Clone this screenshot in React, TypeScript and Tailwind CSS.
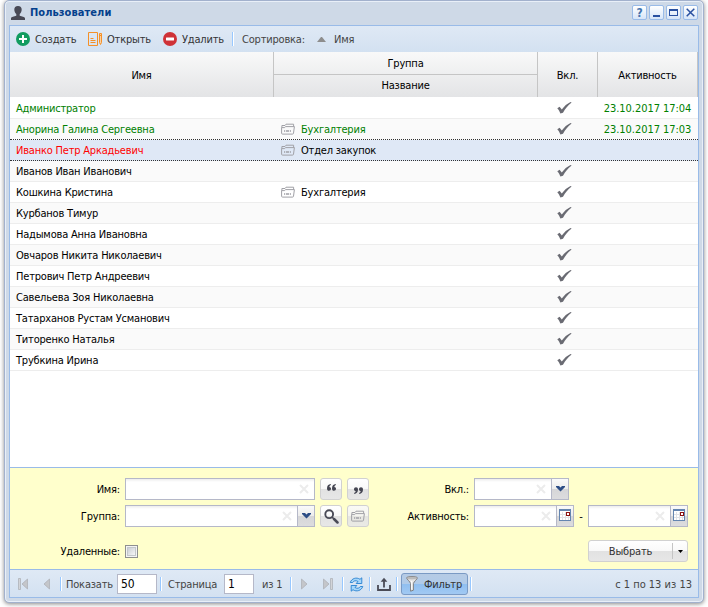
import type { ReactNode } from "react";
import clsx from "clsx";

interface User {
  name: string;
  group?: string;
  enabled?: boolean;
  activity?: string;
  state?: "online" | "disabled";
}

const users: User[] = [
  { name: "Администратор", enabled: true, activity: "23.10.2017 17:04", state: "online" },
  { name: "Анорина Галина Сергеевна", group: "Бухгалтерия", enabled: true, activity: "23.10.2017 17:03", state: "online" },
  { name: "Иванко Петр Аркадьевич", group: "Отдел закупок", state: "disabled" },
  { name: "Иванов Иван Иванович", enabled: true },
  { name: "Кошкина Кристина", group: "Бухгалтерия", enabled: true },
  { name: "Курбанов Тимур", enabled: true },
  { name: "Надымова Анна Ивановна", enabled: true },
  { name: "Овчаров Никита Николаевич", enabled: true },
  { name: "Петрович Петр Андреевич", enabled: true },
  { name: "Савельева Зоя Николаевна", enabled: true },
  { name: "Татарханов Рустам Усманович", enabled: true },
  { name: "Титоренко Наталья", enabled: true },
  { name: "Трубкина Ирина", enabled: true },
];

const Label = ({ children, className }: { children: ReactNode; className?: string }) => (
  <span className={clsx("block shrink-0 whitespace-nowrap", className)}>{children}</span>
);

/* Icons */

const FolderIcon = () => (
  <svg width="14" height="12" viewBox="0 0 14 12" fill="none" stroke="#a0a0a6" className="shrink-0">
    <path d="M.9 4V2.500H4L5 1.200h7.600v2.300" strokeWidth="1" />
    <path d="M.6 4.300v5.900c0 .6.3.9.9.9h10c.6 0 .9-.3 1-.9l.9-6.600H4.500l-.8 1H.6" strokeWidth="1" />
    <path d="M3 8h1m.800 0h3.400m.8 0h1" strokeWidth="1.400" />
  </svg>
);

const CheckIcon = () => (
  <svg width="15" height="12" viewBox="0 0 15 12">
    <path d="M.3 6.200 2.600 4.800l2.200 2.700C7.300 4.200 10 1.600 13.600 0l1 .5C10.900 3.500 8.300 6.700 6 10.700L3.400 11.600C2.700 9.500 1.800 8 .3 6.200Z" fill="#6a6b73" />
  </svg>
);

const UserIcon = () => (
  <svg width="14" height="14" viewBox="0 0 14 14" fill="#484955">
    <path d="M7 0C4.500 0 3.200 1.500 3.300 3.700c.1 1.900.9 3.300 2 4.400v1.600C3.200 10.600.3 10.500 0 12.200V14h14v-1.800c-.3-1.700-3.200-1.600-5.300-2.500V8.100c1.100-1.100 1.900-2.500 2-4.400C10.800 1.500 9.500 0 7 0Z" />
  </svg>
);

const AddIcon = () => (
  <svg width="14" height="14" viewBox="0 0 14 14">
    <circle cx="7" cy="7" r="7" fill="#129c60" />
    <path d="M7 3v8M3 7h8" stroke="#fff" strokeWidth="2" />
  </svg>
);

const RemoveIcon = () => (
  <svg width="14" height="14" viewBox="0 0 14 14">
    <circle cx="7" cy="7" r="7" fill="#cf3237" />
    <rect x="3" y="5.500" width="8" height="3" rx=".5" fill="#fff" />
  </svg>
);

const EditIcon = () => (
  <svg width="14" height="14" viewBox="0 0 14 14" fill="none" stroke="#f59027">
    <path d="M9.500 13.500h-9V.5h9z" />
    <path d="M2.500 6.500h3m-3 2h5m-5 2h5" strokeWidth="1" />
    <path d="M11.500 1.500h2v9l-1 2-1-2zM11.500 3.500h2" fill="#fbd0a0" />
  </svg>
);

const ClearMark = () => (
  <svg width="10" height="10" viewBox="0 0 10 10" className="shrink-0">
    <path d="m1 1 8 8m0-8L1 9" stroke="#ececec" strokeWidth="2" />
  </svg>
);

const ChevronIcon = () => (
  <svg width="9" height="6" viewBox="0 0 9 6" className="-mt-px">
    <path d="M0 0h3l1.500 1.500L6 0h3v1L4.500 5.500 0 1z" fill="#2d4d86" />
  </svg>
);

const CalendarIcon = () => (
  <svg width="12" height="12" viewBox="0 0 12 12" shapeRendering="crispEdges" className="-mt-0.5">
    <rect width="12" height="12" fill="#6485b0" />
    <rect x="1" y="2" width="10" height="9" fill="#fff" />
    <path d="M3.500 3v8M6.500 3v8M9.500 3v8M1 5.500h10M1 8.500h10" stroke="#e0e2e6" />
    <rect x="7.500" y="3.500" width="3" height="3" fill="#fff" stroke="#8c1111" />
  </svg>
);

const QuoteIcon = ({ flip = false }: { flip?: boolean }) => (
  <svg width="9" height="7" viewBox="0 0 9 7" fill="#454652" className={clsx(flip ? "mt-0.5 rotate-180" : "-mt-1")}>
    <path d="M3.800 0C1.300.3 0 1.900 0 4.400 0 6 .8 6.800 2 6.800s2-.8 2-2S3.300 3 2.300 2.900c.1-.9.600-1.500 1.500-1.900zM8.800 0C6.300.3 5 1.900 5 4.400 5 6 5.800 6.800 7 6.800s2-.8 2-2S8.300 3 7.300 2.900c.1-.9.600-1.500 1.500-1.900z" />
  </svg>
);

const SearchIcon = () => (
  <svg width="15" height="15" viewBox="0 0 15 15" fill="none" stroke="#4a4b57">
    <circle cx="5.200" cy="5.200" r="3.900" strokeWidth="1.900" />
    <path d="m8 8 2 2" strokeWidth="1.600" />
    <path d="m10 10 3.500 3.500" strokeWidth="2.500" strokeLinecap="round" />
  </svg>
);

const RefreshIcon = () => (
  <svg width="15" height="15" viewBox="0 0 15 15" strokeLinejoin="round">
    <path d="M1.200 5.500C2.500 1.500 7.500-.2 11 2.300L12.800.8v5.700H7.200L9 4.500C6.800 3 4.500 3.800 3.700 5.500z" fill="#a5d6fa" stroke="#2680d0" strokeWidth=".9" />
    <path d="M13.800 9.500c-1.300 4-6.300 5.700-9.800 3.200l-1.800 1.500V8.500h5.600L6 10.500c2.200 1.500 4.500.7 5.300-1z" fill="#a5d6fa" stroke="#2680d0" strokeWidth=".9" />
  </svg>
);

const UploadIcon = () => (
  <svg width="14" height="14" viewBox="0 0 14 14" fill="none" stroke="#4a4b57">
    <path d="M1 8v5h12V8" strokeWidth="1.800" />
    <path d="M7 10.500V3" strokeWidth="1.800" />
    <path d="M3.600 4.700 7 .7l3.400 4z" fill="#4a4b57" stroke="none" />
  </svg>
);

const FunnelIcon = () => (
  <svg width="12" height="16" viewBox="0 0 12 16">
    <path d="M.6 1.800C.6.200 11.400.200 11.400 1.800c0 1.200-3.600 4-4 5.700v6.700l-2.800 1V7.500c-.4-1.700-4-4.500-4-5.700Z" fill="#e4e4e4" stroke="#777" strokeWidth=".9" />
    <ellipse cx="6" cy="2" rx="4.500" ry="1" fill="#c8c8c8" stroke="#999" strokeWidth=".5" />
    <path d="M5.700 5v8.500" stroke="#fff" />
  </svg>
);

const PageIcon = ({ edge = false, next = false }: { edge?: boolean; next?: boolean }) => (
  <svg width="10" height="12" viewBox="0 0 10 12" className={clsx(next && "rotate-180")}>
    {edge && <path d="M.5.5h2v11h-2z" fill="#d2d4d8" stroke="#a9acb2" strokeWidth=".7" />}
    <path d="M9.500 1v10L4 6z" fill="#c4c6ca" stroke="#aaadb3" strokeWidth=".7" />
  </svg>
);

/* Controls */

const Separator = () => (
  <div className="h-3.5 w-0.5 shrink-0 border-l border-r border-l-[#98c8ff] border-r-white" />
);

const ToolButton = ({ children }: { children: ReactNode }) => (
  <button className="flex h-[15px] w-[15px] items-center justify-center rounded-xs border border-[#99bbe8] bg-linear-to-b from-white to-[#d6e5f8]">
    {children}
  </button>
);

const IconButton = ({ children, disabled = false }: { children: ReactNode; disabled?: boolean }) => (
  <button
    className={clsx(
      "flex h-[22px] w-[22px] items-center justify-center rounded-[3px] border border-[#d1d1d1]",
      disabled
        ? "bg-[linear-gradient(#fafaf5,#f5f5f0_48%,#e6e6e1_52%,#eaeae5)]"
        : "bg-[linear-gradient(#fff,#f9f9f9_48%,#e2e2e2_52%,#e7e7e7)]"
    )}
  >
    {children}
  </button>
);

const Field = ({ className, trigger }: { className?: string; trigger?: "select" | "date" }) => (
  <div className={clsx("flex h-[22px] shrink-0 border border-[#b5b8c8] bg-[linear-gradient(#ededed,#fff_3px)]", className)}>
    <div className="flex flex-1 items-center justify-end pr-[5px]">
      <ClearMark />
    </div>
    {trigger && (
      <div className="flex w-[17px] items-center justify-center border-l border-[#b5b8c8] bg-[linear-gradient(#fafafa,#ededed_48%,#d6d6d8_52%,#dcdcde)]">
        {trigger === "select" ? <ChevronIcon /> : <CalendarIcon />}
      </div>
    )}
  </div>
);

const HeaderCell = ({ children, className }: { children: ReactNode; className?: string }) => (
  <div className={clsx("flex items-center justify-center border-r border-[#c5c5c5]", className)}>
    {children}
  </div>
);

const UserRow = ({ user, index }: { user: User; index: number }) => {
  const selected = user.state === "disabled";
  const beforeSelected = users[index + 1]?.state === "disabled";
  const green = user.state === "online" && "text-[#008000]";
  return (
    <div
      className={clsx(
        "grid h-[21px] grid-cols-[264px_264px_60px_99px] border-b",
        selected ? "bg-[#dfe8f6]" : index % 2 ? "bg-[#fafafa]" : "bg-white",
        selected || beforeSelected ? "border-dotted border-[#333]" : "border-[#ededed]"
      )}
    >
      <div className={clsx("flex items-center pl-1.5", green, selected && "text-[#ff0000]")}>
        <Label>{user.name}</Label>
      </div>
      <div className={clsx("flex items-center gap-1.5 pl-[7px]", green)}>
        {user.group && (
          <>
            <FolderIcon />
            <Label>{user.group}</Label>
          </>
        )}
      </div>
      <div className="flex items-center justify-center pr-[7px]">{user.enabled && <CheckIcon />}</div>
      <div className={clsx("flex items-center justify-center", green)}>
        {user.activity && <Label className="tracking-[-0.005em]">{user.activity}</Label>}
      </div>
    </div>
  );
};

const FilterPanel = () => (
  <div className="flex h-[103px] shrink-0 justify-between border-y border-[#99bbe8] bg-[#ffffcc] pt-2.5 pr-2.5">
    <div className="flex flex-col">
      <div className="flex items-center">
        <Label className="mr-[5px] w-[110px] text-right">Имя:</Label>
        <Field className="w-[190px]" />
        <div className="ml-[5px] flex gap-[5px]">
          <IconButton><QuoteIcon /></IconButton>
          <IconButton><QuoteIcon flip /></IconButton>
        </div>
      </div>
      <div className="mt-[5px] flex items-center">
        <Label className="mr-[5px] w-[110px] text-right">Группа:</Label>
        <Field className="w-[190px]" trigger="select" />
        <div className="ml-[5px] flex gap-[5px]">
          <IconButton><SearchIcon /></IconButton>
          <IconButton disabled><FolderIcon /></IconButton>
        </div>
      </div>
      <div className="mt-[13px] flex h-[22px] items-center">
        <Label className="mr-[5px] w-[110px] text-right">Удаленные:</Label>
        <div className="h-[13px] w-[13px] border border-[#8e8f8f] bg-[#f4f4f4] p-px">
          <div className="h-full w-full border border-[#c3c7cb] bg-linear-to-br from-[#cbcfd5] to-[#f6f6f6]" />
        </div>
      </div>
    </div>
    <div className="flex flex-col">
      <div className="flex items-center">
        <Label className="mr-[5px] w-[75px] text-right">Вкл.:</Label>
        <Field className="w-[95px]" trigger="select" />
      </div>
      <div className="mt-[5px] flex items-center">
        <Label className="mr-[5px] w-[75px] text-right">Активность:</Label>
        <Field className="w-[100px]" trigger="date" />
        <Label className="w-3.5 text-center">-</Label>
        <Field className="w-[100px]" trigger="date" />
      </div>
      <button className="mt-[13px] flex h-[22px] w-[100px] items-center self-end rounded-[3px] border border-[#d1d1d1] bg-[linear-gradient(#fff,#f9f9f9_48%,#e2e2e2_52%,#e7e7e7)] text-[#333]">
        <span className="flex-1 text-center">Выбрать</span>
        <span className="flex h-4 w-[15px] items-center justify-center border-l border-[#c4c4c4]">
          <svg width="5" height="3" viewBox="0 0 5 3"><path d="M0 0h5L2.500 3z" fill="#000" /></svg>
        </span>
      </button>
    </div>
  </div>
);

const PagingBar = () => (
  <div className="flex h-[27px] shrink-0 items-center bg-linear-to-b from-[#dfe9f5] to-[#d3e1f1] pt-px text-[#444]">
    <div className="flex w-[50px] items-center gap-3 pl-2">
      <PageIcon edge />
      <PageIcon />
    </div>
    <Separator />
    <Label className="ml-1 w-[51px]">Показать</Label>
    <div className="flex h-5 w-10 items-center border border-[#b5b8c8] bg-white pl-[3px] text-[12px] text-black">50</div>
    <div className="w-[3px]" />
    <Separator />
    <Label className="ml-1.5 w-14">Страница</Label>
    <div className="flex h-5 w-[30px] items-center border border-[#b5b8c8] bg-white pl-[3px] text-[12px] text-black">1</div>
    <Label className="w-9 pl-2">из 1</Label>
    <Separator />
    <div className="flex w-[50px] items-center gap-3 pl-[9px]">
      <PageIcon next />
      <PageIcon next edge />
    </div>
    <Separator />
    <div className="flex w-[25px] justify-center"><RefreshIcon /></div>
    <Separator />
    <div className="flex w-[25px] justify-center"><UploadIcon /></div>
    <Separator />
    <button className="ml-[3px] flex h-[22px] w-[67px] items-center gap-1.5 rounded-[3px] border border-[#7a9ac4] bg-[linear-gradient(#b6cbe4,#b0cbe9_48%,#90bff0_52%,#a1c9f3)] pl-1 text-[#333]">
      <FunnelIcon />
      <Label>Фильтр</Label>
    </button>
    <div className="w-0.5" />
    <Separator />
    <Label className="ml-auto pr-1.5 tracking-normal">с 1 по 13 из 13</Label>
  </div>
);

const App = () => {
  return (
    <div className="h-[607px] w-[708px] overflow-hidden bg-white pl-1 font-['DejaVu_Sans_Condensed','DejaVu_Sans',sans-serif] text-[11px] leading-[13px] tracking-[-0.018em] text-black">
      <div className="flex h-[603px] w-[700px] flex-col rounded-[5px] border border-[#a2b1cd] bg-[#ced9e7] px-1 pb-1 shadow-[0_1px_4px_#888] inset-shadow-[0_0_0_1px_#e8eff8]">
        {/* Title bar */}
        <div className="flex h-6 shrink-0 items-center pr-px pb-px pl-0.5">
          <UserIcon />
          <Label className="ml-[5px] font-bold tracking-[0.005em] text-[#04408c]">Пользователи</Label>
          <div className="ml-auto flex gap-0.5">
            <ToolButton><span className="text-[12px] leading-none font-bold text-[#4473ad]">?</span></ToolButton>
            <ToolButton><span className="mt-1.5 h-0.5 w-[7px] bg-[#2950a0]" /></ToolButton>
            <ToolButton><span className="h-[7px] w-[9px] border border-t-2 border-[#2950a0]" /></ToolButton>
            <ToolButton>
              <svg width="9" height="9" viewBox="0 0 9 9"><path d="m.7.7 7.600 7.600m0-7.600L.7 8.300" stroke="#2950a0" strokeWidth="1.500" /></svg>
            </ToolButton>
          </div>
        </div>

        <div className="flex min-h-0 flex-1 flex-col border border-[#99bbe8] bg-white">
          {/* Toolbar */}
          <div className="flex h-[26px] shrink-0 items-center bg-linear-to-b from-[#dfe9f5] to-[#d3e1f1] pl-1.5 text-[#333]">
            <AddIcon />
            <Label className="ml-[5px] w-[53px]">Создать</Label>
            <EditIcon />
            <Label className="ml-[5px] w-14">Открыть</Label>
            <RemoveIcon />
            <Label className="ml-[5px] w-[50px]">Удалить</Label>
            <Separator />
            <Label className="ml-2 w-[75px] text-[#444]">Сортировка:</Label>
            <svg width="9" height="5" viewBox="0 0 9 5"><path d="M4 0h1l4 5H0z" fill="#8d8d8d" /></svg>
            <Label className="ml-2 text-[#444]">Имя</Label>
          </div>

          {/* Column headers */}
          <div className="grid h-[45px] shrink-0 grid-cols-[264px_264px_60px_100px] bg-linear-to-b from-[#f9f9f9] to-[#e3e4e6]">
            <HeaderCell className="pt-0.5">Имя</HeaderCell>
            <div className="flex flex-col">
              <HeaderCell className="h-[23px] border-b">Группа</HeaderCell>
              <HeaderCell className="h-[22px] pb-px">Название</HeaderCell>
            </div>
            <HeaderCell className="pt-0.5">Вкл.</HeaderCell>
            <HeaderCell className="pt-0.5">Активность</HeaderCell>
          </div>

          <div className="flex-1 pt-px">
            {users.map((user, index) => (
              <UserRow key={user.name} user={user} index={index} />
            ))}
          </div>

          <FilterPanel />
          <PagingBar />
        </div>
      </div>
    </div>
  );
};

export default App;
